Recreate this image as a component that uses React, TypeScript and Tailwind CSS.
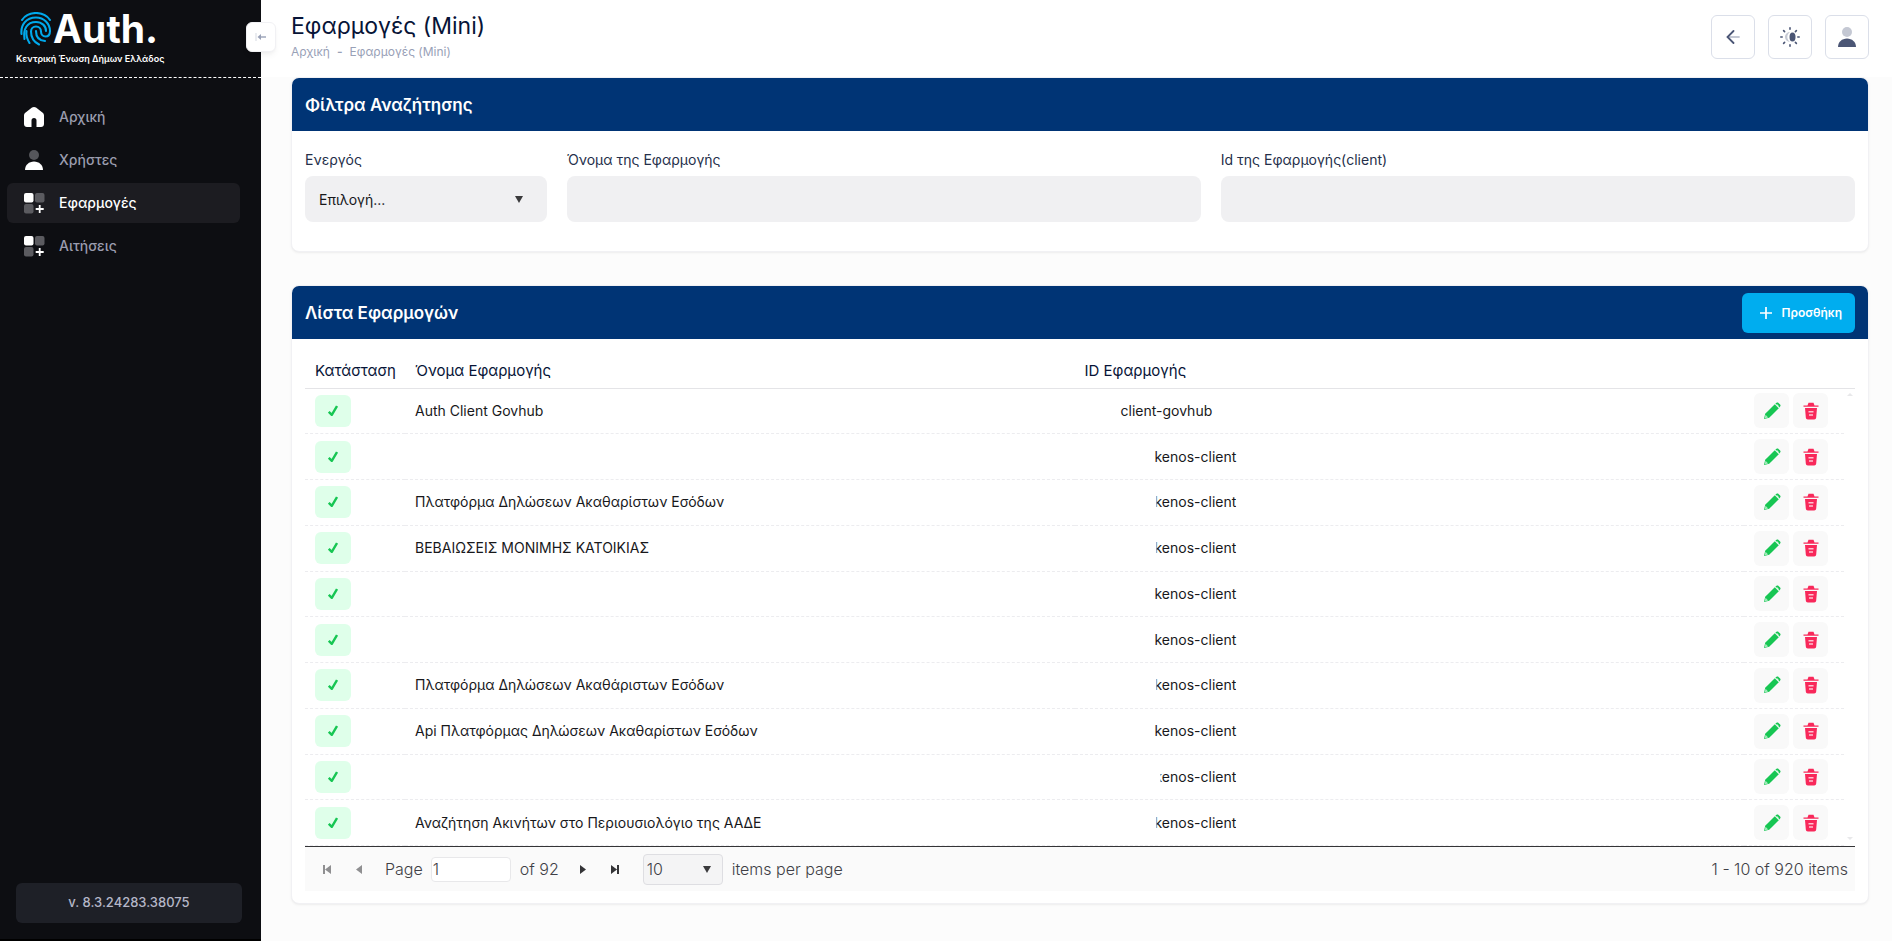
import { useState, type ReactNode } from 'react';

const navItems = [
  { label: 'Αρχική', icon: 'home' },
  { label: 'Χρήστες', icon: 'user' },
  { label: 'Εφαρμογές', icon: 'apps' },
  { label: 'Αιτήσεις', icon: 'apps' },
];

// some ids are partly masked, `clip` picks how much of the first letter is hidden
const rows = [
  { name: 'Auth Client Govhub', id: 'client-govhub', clip: 'ml-9' },
  { name: '', id: 'kenos-client', clip: 'ml-[70px]' },
  { name: 'Πλατφόρμα Δηλώσεων Ακαθαρίστων Εσόδων', id: 'kenos-client', clip: 'ml-[70px] [clip-path:inset(0_0_0_2px)]' },
  { name: 'ΒΕΒΑΙΩΣΕΙΣ ΜΟΝΙΜΗΣ ΚΑΤΟΙΚΙΑΣ', id: 'kenos-client', clip: 'ml-[70px] [clip-path:inset(0_0_0_2px)]' },
  { name: '', id: 'kenos-client', clip: 'ml-[70px]' },
  { name: '', id: 'kenos-client', clip: 'ml-[70px]' },
  { name: 'Πλατφόρμα Δηλώσεων Ακαθάριστων Εσόδων', id: 'kenos-client', clip: 'ml-[70px] [clip-path:inset(0_0_0_2px)]' },
  { name: 'Api Πλατφόρμας Δηλώσεων Ακαθαρίστων Εσόδων', id: 'kenos-client', clip: 'ml-[70px]' },
  { name: '', id: 'kenos-client', clip: 'ml-[70px] [clip-path:inset(0_0_0_6px)]' },
  { name: 'Αναζήτηση Ακινήτων στο Περιουσιολόγιο της ΑΑΔΕ', id: 'kenos-client', clip: 'ml-[70px] [clip-path:inset(0_0_0_2px)]' },
];

function Fingerprint() {
  return (
    <svg width="32" height="34" viewBox="0 0 32 34" fill="none" stroke="#00a9ec" strokeWidth="2.1" strokeLinecap="round">
      <path d="M2 8C5 3.500 10 1 16 1s11 2.500 14 7" />
      <path d="M1.500 22C.5 13 6 5.500 16 5.500c8 0 14 6 14 13.500 0 3.500-2 5.500-4.500 5.500S21 22.500 21 19.500c0-3-2-5-5-5s-5 2-5 5c0 6 3 10.500 8 13" />
      <path d="M4.500 27C3 17 7 10 16 10c6 0 10 4 10 9" />
      <path d="M9.500 31C6.500 26 6 22 6.500 19" />
      <path d="M16 19c0 6 3 9.500 9 10" />
    </svg>
  );
}

function UserIcon({ head, body }: { head: string; body: string }) {
  return (
    <svg width="22" height="22" viewBox="0 0 22 22">
      <circle cx="11" cy="6" r="5" fill={head} />
      <path d="M2 21c0-5 4-8.500 9-8.500s9 3.500 9 8.500z" fill={body} />
    </svg>
  );
}

function NavIcon({ name }: { name: string }) {
  if (name === 'user') return <UserIcon head="#55565b" body="#fff" />;
  if (name === 'home') {
    return (
      <svg width="22" height="22" viewBox="0 0 22 22">
        <path d="M9 1.600 2.300 6.800C1.500 7.500 1 8.500 1 9.600V18c0 1.700 1.300 3 3 3h4.500v-6.500a2.500 2.500 0 0 1 5 0V21H18c1.700 0 3-1.300 3-3V9.600c0-1.100-.5-2.100-1.300-2.800L13 1.600c-1.200-.9-2.800-.9-4 0z" fill="#fff" />
      </svg>
    );
  }
  return (
    <svg width="22" height="22" viewBox="0 0 22 22">
      <rect x="1" y="1" width="9.500" height="9.500" rx="2" fill="#fff" />
      <rect x="12" y="1" width="9.500" height="9.500" rx="2" fill="#5b5b60" />
      <rect x="1" y="12" width="9.500" height="9.500" rx="2" fill="#5b5b60" />
      <path d="M16.700 13v8M12.700 17h8" stroke="#fff" strokeWidth="1.800" />
    </svg>
  );
}

function HeaderButton({ label, children }: { label: string; children: ReactNode }) {
  return (
    <button aria-label={label} className="flex size-11 items-center justify-center rounded-md border border-[#dbdfe9] bg-white">
      {children}
    </button>
  );
}

function Caret({ className }: { className: string }) {
  return (
    <svg width="8" height="7" viewBox="0 0 8 7" className={`pointer-events-none absolute ${className}`}>
      <path d="M0 0h8L4 7z" fill="#3a3a3c" />
    </svg>
  );
}

function PageButton({ label, path, muted }: { label: string; path: string; muted?: boolean }) {
  return (
    <button aria-label={label} disabled={muted} className="flex h-8 w-8 items-center justify-center">
      <svg width="8" height="9" viewBox="0 0 8 9" fill={muted ? '#8f8f91' : '#343437'}>
        <path d={path} />
      </svg>
    </button>
  );
}

function Sidebar() {
  return (
    <aside className="relative flex w-[261px] shrink-0 flex-col border-b-2 border-black bg-[#0d0e12]">
      <div className="h-[78px] border-b border-dashed border-white pt-[11px] pl-4">
        <div className="flex h-9 items-center gap-px pl-1">
          <Fingerprint />
          <span className="text-[39px] leading-9 font-bold text-white">Auth.</span>
        </div>
        <p className="text-[9px] leading-6 font-semibold text-white">Κεντρική Ένωση Δήμων Ελλάδος</p>
      </div>
      <button aria-label="Σύμπτυξη μενού" className="absolute top-[22px] -right-[15px] z-10 flex size-[30px] items-center justify-center rounded-md border border-[#f1f1f4] bg-white shadow-md shadow-black/5">
        <svg width="12" height="10" viewBox="0 0 12 10" fill="none" stroke="#99a1b7">
          <path d="M1 1v8" strokeOpacity=".4" />
          <path d="M11 5H4" strokeWidth="1.400" />
          <path d="M6 2 2.500 5 6 8z" fill="#99a1b7" stroke="none" />
        </svg>
      </button>
      <nav className="flex flex-1 flex-col gap-[3px] pt-[19px] pr-[21px] pl-[7px]">
        {navItems.map(item => (
          <a
            key={item.label}
            href="#"
            className={`flex h-10 items-center gap-[14px] rounded-md pl-4 text-sm font-medium ${
              item.label === 'Εφαρμογές' ? 'bg-[#1c1c21] text-white' : 'text-[#9a9cae]'
            }`}
          >
            <NavIcon name={item.icon} />
            {item.label}
          </a>
        ))}
      </nav>
      <div className="pr-[19px] pb-4 pl-4">
        <button className="h-10 w-full rounded-md bg-[#1e2027] text-[13px] font-medium text-[#b5b7c8]">v. 8.3.24283.38075</button>
      </div>
    </aside>
  );
}

function Card({ title, action, children }: { title: string; action?: ReactNode; children: ReactNode }) {
  return (
    <section className="overflow-hidden rounded-lg border border-[#f1f1f4] bg-white shadow-sm shadow-black/5">
      <div className="flex h-[53px] items-center justify-between bg-[#003475] px-[13px]">
        <h2 className="pt-0.5 text-[17px] font-semibold text-white">{title}</h2>
        {action}
      </div>
      {children}
    </section>
  );
}

function Filters() {
  return (
    <Card title="Φίλτρα Αναζήτησης">
      <div className="grid grid-cols-12 gap-5 px-[13px] pt-[18px] pb-[29px] text-[#252f4a]">
        <div className="col-span-2">
          <label htmlFor="active" className="block pb-[5px] text-sm leading-[22px]">Ενεργός</label>
          <div className="relative">
            <select id="active" className="h-[46px] w-full appearance-none rounded-lg bg-[#f0f0f2] px-[14px] pt-0.5 text-sm text-[#18181b]">
              <option>Επιλογή...</option>
            </select>
            <Caret className="top-5 right-6" />
          </div>
        </div>
        <div className="col-span-5">
          <label htmlFor="name" className="block pb-[5px] text-sm leading-[22px]">Όνομα της Εφαρμογής</label>
          <input id="name" className="h-[46px] w-full rounded-lg bg-[#f0f0f2] px-3" />
        </div>
        <div className="col-span-5">
          <label htmlFor="client" className="block pb-[5px] text-sm leading-[22px]">Id της Εφαρμογής(client)</label>
          <input id="client" className="h-[46px] w-full rounded-lg bg-[#f0f0f2] px-3" />
        </div>
      </div>
    </Card>
  );
}

function AppsTable() {
  return (
    <div className="relative">
      <table className="h-[494px] w-full table-fixed border-collapse text-left">
        <colgroup>
          <col className="w-[100px]" />
          <col />
          <col />
          <col className="w-[100px]" />
          <col className="w-[11px]" />
        </colgroup>
        <thead>
          <tr className="h-9 border-b border-[#e4e4e7] text-[15px] text-[#071437]">
            <th className="pt-0.5 pl-[10px] font-normal">Κατάσταση</th>
            <th className="pt-0.5 pl-[10px] font-normal">Όνομα Εφαρμογής</th>
            <th className="pt-0.5 pl-[10px] font-normal">ID Εφαρμογής</th>
            <th colSpan={2} />
          </tr>
        </thead>
        <tbody className="text-sm text-[#18181b]">
          {rows.map((row, i) => (
            <tr key={i}>
              <td className="border-b border-dashed border-[#ececef] pl-[10px]">
                <span className="flex h-8 w-9 items-center justify-center rounded-md bg-[#dfffea]">
                  <svg width="10" height="12" viewBox="0 0 10 12" fill="none" stroke="#17c653" strokeWidth="2.400" strokeLinejoin="round">
                    <path d="M.8 6.800 3.800 9.800 9 1" />
                  </svg>
                </span>
              </td>
              <td className="truncate border-b border-dashed border-[#ececef] pl-[10px]">{row.name}</td>
              <td className="border-b border-dashed border-[#ececef] pl-[10px]">
                <span className={`inline-block ${row.clip}`}>{row.id}</span>
              </td>
              <td className="border-b border-dashed border-[#ececef] pl-[10px]">
                <div className="flex gap-1">
                  <button aria-label="Επεξεργασία" className="flex size-[35px] items-center justify-center rounded-md bg-[#f9f9f9]">
                    <svg width="18" height="18" viewBox="0 0 18 18">
                      <path d="M1 17l1.200-5.200L11.800 2.200l4 4L6.200 15.800z" fill="#17c653" />
                      <path d="M12.400 1.700 13.500.8c.7-.5 1.500-.4 2 .1l1.600 1.600c.6.600.6 1.400 0 2L16.300 5.600z" fill="#17c653" />
                      <path d="M13.400 2.600 15.500 4.700" stroke="#d5f7df" strokeWidth="1.600" />
                      <path d="M2.500 12.800 5.200 15.500 1.800 16.300z" fill="#a9ecc0" />
                    </svg>
                  </button>
                  <button aria-label="Διαγραφή" className="flex size-[35px] items-center justify-center rounded-md bg-[#f9f9f9]">
                    <svg width="16" height="18" viewBox="0 0 16 18">
                      <path d="M.5 3.500h4L5.500.8h5l1 2.700h4v1.200H.5z" fill="#f8285a" />
                      <path d="M2 6h12l-.8 9.500c-.1 1.200-.9 2-2 2H4.800c-1.100 0-1.900-.8-2-2z" fill="#f8285a" />
                      <path d="M5.500 9.700h5M6 13h4" stroke="#fdc3d1" strokeWidth="1.500" />
                    </svg>
                  </button>
                </div>
              </td>
              <td />
            </tr>
          ))}
        </tbody>
      </table>
      <svg width="6" height="3" viewBox="0 0 6 3" className="absolute top-[41px] right-0.5 fill-[#e8e8ea]"><path d="M0 3h6L3 0z" /></svg>
      <svg width="6" height="3" viewBox="0 0 6 3" className="absolute right-0.5 bottom-1.5 fill-[#e8e8ea]"><path d="M0 0h6L3 3z" /></svg>
    </div>
  );
}

function Pager() {
  const [page, setPage] = useState('1');

  return (
    <div className="flex h-[45px] items-center border-t border-[#343437] bg-[#fafafa] pr-[7px] pl-[6px] text-base font-light text-[#3f3f46]">
      <PageButton label="First page" path="M0 0h2v9H0zM8 0v9L2 4.500z" muted />
      <PageButton label="Previous page" path="M7 0v9L1 4.500z" muted />
      <label className="ml-[10px] flex items-center gap-2">
        Page
        <input value={page} onChange={e => setPage(e.target.value)} className="h-[25px] w-20 rounded-sm border border-[#e8e8ea] bg-white px-px" />
      </label>
      <span className="mr-2 ml-[9px]">of 92</span>
      <PageButton label="Next page" path="M1 0v9l6-4.500z" />
      <PageButton label="Last page" path="M0 0v9l6-4.500zM6 0h2v9H6z" />
      <label className="ml-3 flex items-center gap-[9px]">
        <span className="relative">
          <select className="block h-[31px] w-20 appearance-none rounded-sm border border-[#dedee2] bg-[#f4f4f5] px-[3px]">
            <option>10</option>
          </select>
          <Caret className="top-3 right-3" />
        </span>
        items per page
      </label>
      <span className="ml-auto">1 - 10 of 920 items</span>
    </div>
  );
}

export default function App() {
  return (
    <div className="flex min-h-screen bg-[#fcfcfc] font-['Inter','Open_Sans',sans-serif]">
      <Sidebar />
      <div className="min-w-0 flex-1">
        <header className="flex h-[77px] items-start justify-between bg-white pr-[23px] pl-[30px]">
          <div className="pt-3">
            <h1 className="text-[23px] leading-7 text-[#071437]">Εφαρμογές (Mini)</h1>
            <p className="flex gap-[7px] text-xs leading-6 text-[#99a1b7]">
              <a href="#">Αρχική</a>
              <span className="font-semibold">-</span>
              <span>Εφαρμογές (Mini)</span>
            </p>
          </div>
          <div className="flex gap-[13px] pt-[15px]">
            <HeaderButton label="Πίσω">
              <svg width="14" height="14" viewBox="0 0 14 14" fill="none" strokeWidth="1.800" strokeLinecap="round">
                <path d="M3 7h10" stroke="#c4c8d3" />
                <path d="M7.500 1 1.500 7l6 6" stroke="#4b5675" />
              </svg>
            </HeaderButton>
            <HeaderButton label="Θέμα">
              <svg width="20" height="20" viewBox="0 0 20 20" fill="none" strokeLinecap="round">
                <path d="M10 5a5 5 0 1 0 0 10 6 6 0 0 1 0-10z" fill="#c4c8d3" />
                <ellipse cx="12.500" cy="10" rx="3" ry="4.500" fill="#4b5675" />
                <path d="M10 .8v1.400M10 17.800v1.400M.8 10h1.400M17.800 10h1.400M3.600 3.600l1 1M15.400 15.400l1 1M3.600 16.400l1-1M15.400 4.600l1-1" stroke="#4b5675" strokeWidth="1.600" />
              </svg>
            </HeaderButton>
            <HeaderButton label="Λογαριασμός">
              <UserIcon head="#c4c8d3" body="#4b5675" />
            </HeaderButton>
          </div>
        </header>
        <main className="flex flex-col gap-[33px] pr-[23px] pl-[30px]">
          <Filters />
          <Card
            title="Λίστα Εφαρμογών"
            action={
              <button className="flex h-10 items-center gap-[7px] rounded-md bg-[#00adef] px-[13px] text-xs font-semibold text-white">
                <svg width="20" height="14" viewBox="0 0 20 14" stroke="#fff" strokeWidth="1.700">
                  <path d="M11 1v12M5 7h12" />
                </svg>
                Προσθήκη
              </button>
            }
          >
            <div className="px-[13px] pt-[13px] pb-3">
              <AppsTable />
              <Pager />
            </div>
          </Card>
        </main>
      </div>
    </div>
  );
}
